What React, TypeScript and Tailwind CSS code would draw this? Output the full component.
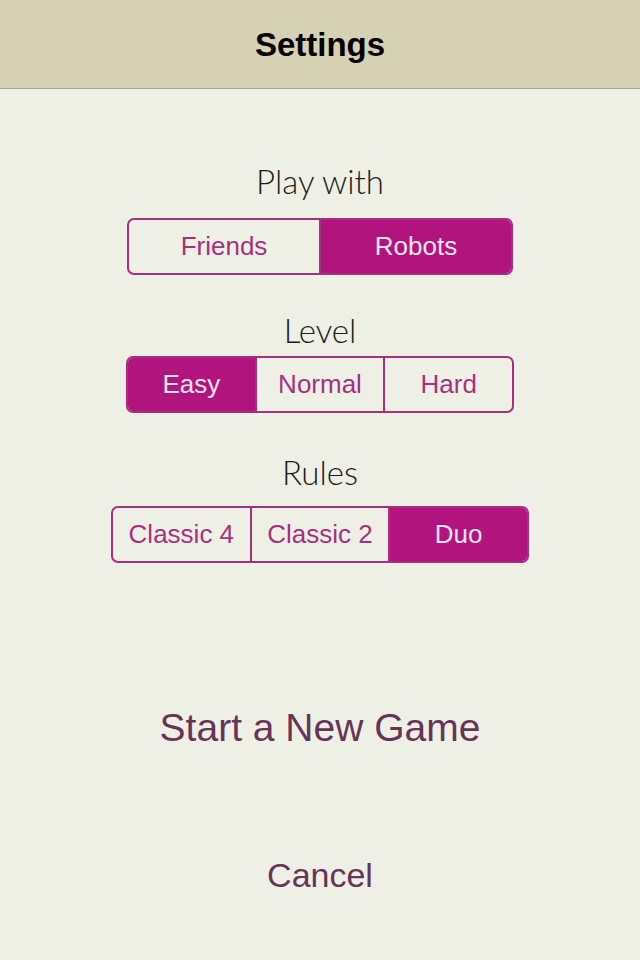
import React from "react";

const SANS = { fontFamily: '"Liberation Sans", Arial, sans-serif' };
const LIGHT = { fontFamily: 'Lato, "Liberation Sans", sans-serif' };

function Segmented({ items, selected, width }: { items: string[]; selected: number; width: string }) {
  return (
    <div className={`flex h-[57px] ${width} rounded-[7px] border-2 border-[#a82f80] overflow-hidden`}>
      {items.map((it, i) => (
        <div
          key={it}
          className={`flex-1 flex items-center justify-center text-[26px] ${i > 0 ? "border-l-2 border-[#a82f80]" : ""} ${
            i === selected ? "bg-[#b1157d] text-[#f7e4f2]" : "text-[#a8307f]"
          }`}
          style={SANS}
        >
          {it}
        </div>
      ))}
    </div>
  );
}

export default function App() {
  return (
    <div className="w-[640px] h-[960px] bg-[#eef0e5] flex flex-col">
      <div className="h-[89px] shrink-0 bg-[#d7d1b4] border-b border-[#a6a59b] flex items-center justify-center">
        <span className="text-[33px] font-bold text-black leading-none" style={SANS}>Settings</span>
      </div>
      <div className="flex flex-col items-center">
        <div className="mt-[72px] h-[40px] leading-[40px] text-[33px] font-light text-[#1c1c1c]" style={LIGHT}>Play with</div>
        <div className="mt-[17px]">
          <Segmented items={["Friends", "Robots"]} selected={1} width="w-[386px]" />
        </div>
        <div className="mt-[35px] h-[40px] leading-[40px] text-[33px] font-light text-[#1c1c1c]" style={LIGHT}>Level</div>
        <div className="mt-[6px]">
          <Segmented items={["Easy", "Normal", "Hard"]} selected={0} width="w-[388px]" />
        </div>
        <div className="mt-[39px] h-[40px] leading-[40px] text-[33px] font-light text-[#1c1c1c]" style={LIGHT}>Rules</div>
        <div className="mt-[14px]">
          <Segmented items={["Classic 4", "Classic 2", "Duo"]} selected={2} width="w-[418px]" />
        </div>
        <div className="mt-[141px] h-[48px] leading-[48px] text-[39px] text-[#673458]" style={SANS}>Start a New Game</div>
        <div className="mt-[103px] h-[40px] leading-[40px] text-[34px] text-[#673458]" style={SANS}>Cancel</div>
      </div>
    </div>
  );
}
